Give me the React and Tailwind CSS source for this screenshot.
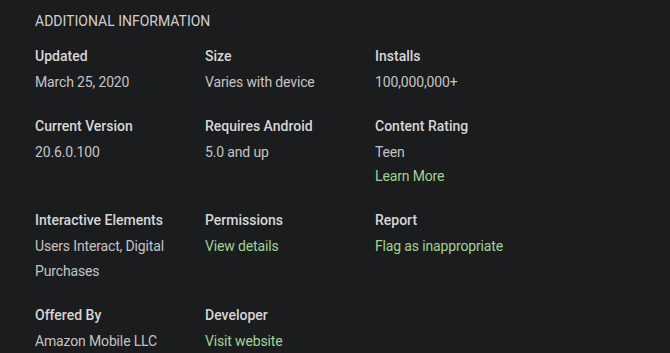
export default function App() {
  const rows = [
    [
      { label: "Updated", values: ["March 25, 2020"] },
      { label: "Size", values: ["Varies with device"] },
      { label: "Installs", values: ["100,000,000+"] },
    ],
    [
      { label: "Current Version", values: ["20.6.0.100"] },
      { label: "Requires Android", values: ["5.0 and up"] },
      { label: "Content Rating", values: ["Teen"], link: "Learn More" },
    ],
    [
      { label: "Interactive Elements", values: ["Users Interact, Digital Purchases"] },
      { label: "Permissions", link: "View details" },
      { label: "Report", link: "Flag as inappropriate" },
    ],
    [
      { label: "Offered By", values: ["Amazon Mobile LLC"] },
      { label: "Developer", link: "Visit website" },
    ],
  ];
  return (
    <div
      className="w-[670px] h-[353px] overflow-hidden bg-[#1b1c1e] pl-[35px] pt-[11px]"
      style={{ fontFamily: "Roboto, 'Liberation Sans', sans-serif" }}
    >
      <div className="text-[14px] leading-[20px] text-[#d0d0d0]">
        ADDITIONAL INFORMATION
      </div>
      <div className="mt-[14.5px] flex flex-col gap-[21.5px]">
        {rows.map((row, i) => (
          <div key={i} className="flex">
            {row.map((c, j) => (
              <div key={j} className="w-[170px] pr-[6px]">
                <div className="text-[14px] leading-[20px] font-medium text-[#d6d6d6]">
                  {c.label}
                </div>
                <div className="mt-[4px] text-[14px] leading-[24.5px] tracking-[-0.15px]">
                  {c.values &&
                    c.values.map((v, k) => (
                      <div key={k} className="text-[#c4c4c4]">
                        {v}
                      </div>
                    ))}
                  {c.link && <div className="text-[#a2d295]">{c.link}</div>}
                </div>
              </div>
            ))}
          </div>
        ))}
      </div>
    </div>
  );
}
